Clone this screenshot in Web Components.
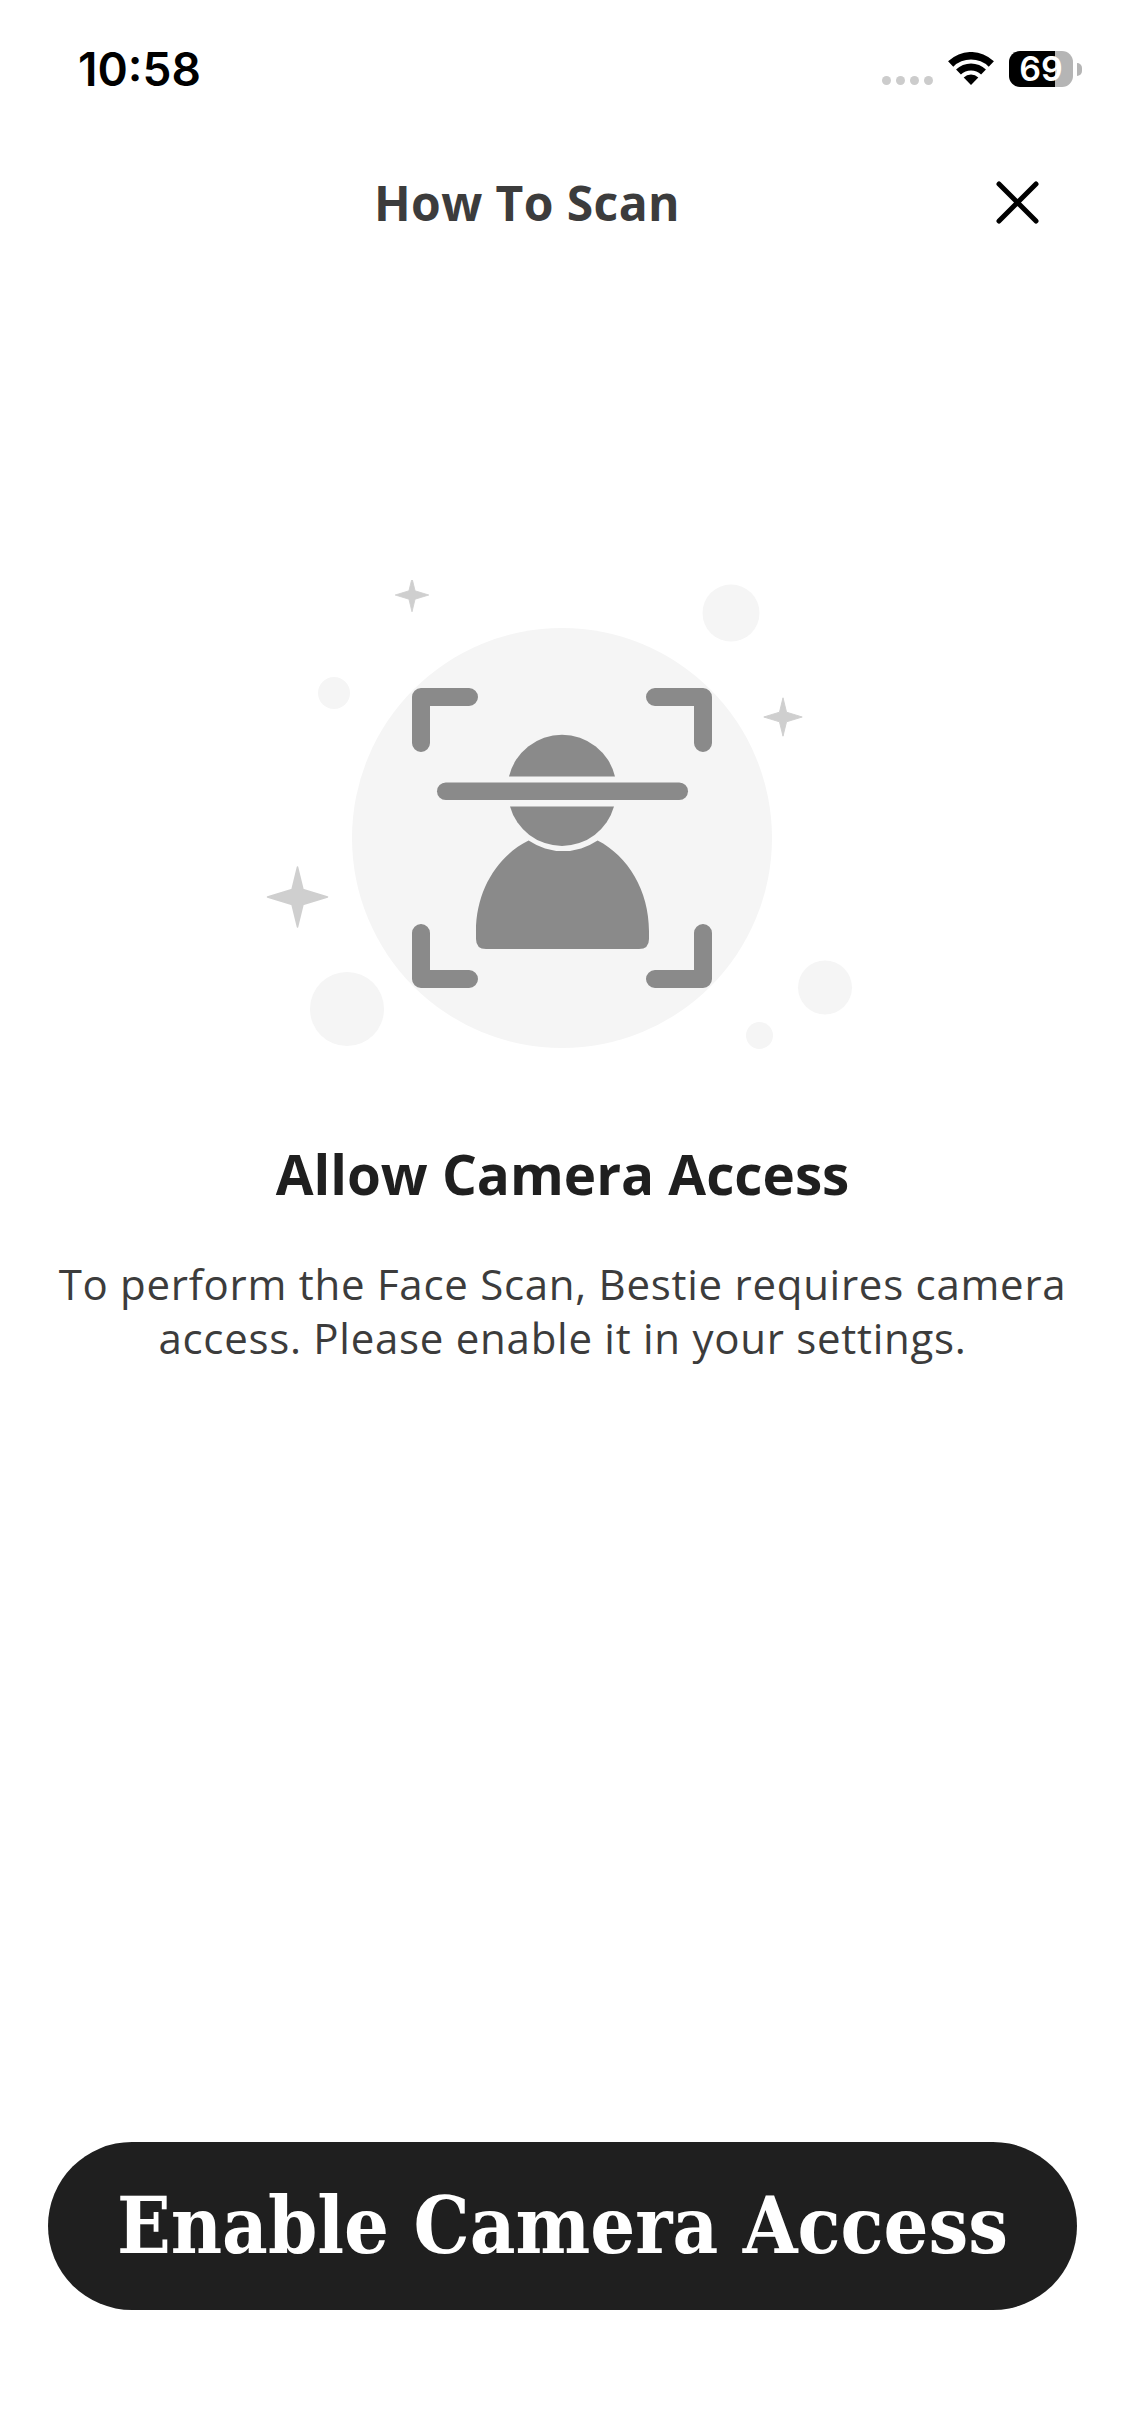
<!DOCTYPE html>
<html lang="en"><head><meta charset="utf-8"><title>How To Scan</title>
<style>
html,body{margin:0;padding:0;background:#fff}
body{font-family:"Open Sans",sans-serif}
</style></head><body>
<app-screen>
  <status-bar time="10:58" level="69"></status-bar>
  <scan-header>How To Scan</scan-header>
  <scan-illustration></scan-illustration>
  <permission-copy heading="Allow Camera Access">To perform the Face Scan, Bestie requires camera<br>access. Please enable it in your settings.</permission-copy>
  <primary-button>Enable Camera Access</primary-button>
</app-screen>
<script>
function def(name, html, init){
  customElements.define(name, class extends HTMLElement{
    constructor(){super();this.attachShadow({mode:'open'}).innerHTML=html;}
    connectedCallback(){if(init)init(this);}
  });
}
def('app-screen',`<style>:host{display:flex;flex-direction:column;width:1125px;height:2436px;background:#fff;overflow:hidden}</style><slot></slot>`);
def('status-bar',`<style>
:host{display:flex;align-items:flex-start;height:161px;box-sizing:border-box;padding:0 43px 0 78px;color:#000}
.time{font:600 46px/54px Inter,sans-serif;margin-top:42px}
.right{margin-left:auto;display:flex;align-items:flex-start;gap:15px;margin-top:51px}
.dots{display:flex;gap:5px;margin-top:25px}
.dots i{width:9px;height:9px;border-radius:50%;background:#ccc}
svg{display:block;margin-top:1px}
.batt{display:flex;align-items:center;gap:4px}
.body{width:64px;height:36px;border-radius:11px;background:linear-gradient(90deg,#000 72%,#b5b5b5 72%);color:#fff;font:600 34px/36px Inter,sans-serif;text-align:center}
.nub{width:5px;height:13px;border-radius:0 5px 5px 0;background:#b5b5b5}
</style>
<div class="time"></div>
<div class="right">
<div class="dots"><i></i><i></i><i></i><i></i></div>
<svg width="46" height="34" viewBox="0 0 46 34" fill="#000"><path d="M.07 9.24A33 33 0 0 1 45.93 9.24L40.72 14.64A25.5 25.5 0 0 0 5.28 14.64Z"/><path d="M8.06 17.52A21.5 21.5 0 0 1 37.94 17.52L33.08 22.56A14.5 14.5 0 0 0 12.92 22.56Z"/><path d="M15.7 25.44A10.5 10.5 0 0 1 30.3 25.44L23 33Z"/></svg>
<div class="batt"><div class="body"></div><div class="nub"></div></div>
</div>`, el=>{
  el.shadowRoot.querySelector('.time').textContent=el.getAttribute('time');
  el.shadowRoot.querySelector('.body').textContent=el.getAttribute('level');
});
def('scan-header',`<style>
:host{display:flex;align-items:center;height:84px;padding:0 86px 0 58px;box-sizing:border-box;width:100%}
.t{flex:1;text-align:center;font:700 48px/84px "Open Sans",sans-serif;color:#3c3c3c;letter-spacing:.4px}
svg{display:block;margin-top:-2px}
</style><div class="t"><slot></slot></div>
<svg width="43" height="43" viewBox="0 0 43 43" fill="none" stroke="#000" stroke-width="5" stroke-linecap="round"><path d="M3 3 40 40M40 3 3 40"/></svg>`);
def('scan-illustration',`<style>
:host{display:flex;justify-content:center;margin-top:335px}
svg{display:block}
</style>
<svg width="640" height="480" viewBox="243 579 640 480">
<defs><path id="s" d="M0-30L5.500-7.500L30 0L5.500 7.500L0 30L-5.500 7.500L-30 0L-5.500-7.500Z" stroke-width="1.500" stroke-linejoin="round" stroke="#cfcfcf"/></defs>
<g fill="#f5f5f5"><circle cx="562" cy="837" r="210"/><circle cx="731" cy="612" r="28.500"/><circle cx="334" cy="692" r="16"/><circle cx="347" cy="1008" r="37"/><circle cx="825" cy="986.500" r="27"/><circle cx="759.500" cy="1034.500" r="13.500"/></g>
<g fill="#cfcfcf"><use href="#s" transform="translate(412 594) scale(.56)"/><use href="#s" transform="translate(783 716) scale(.64)"/><use href="#s" transform="translate(297.500 896)"/></g>
<g fill="none" stroke="#8a8a8a" stroke-width="18" stroke-linecap="round" stroke-linejoin="round">
<path d="M469 696H421V742"/><path d="M655 696H703V742"/><path d="M421 932V978H469"/><path d="M703 932V978H655"/>
</g>
<g fill="#8a8a8a">
<rect x="437" y="781.500" width="251" height="17.500" rx="8.750"/>
<path d="M509 775.500A54.500 54.500 0 0 1 615 775.500Z"/>
<path d="M510 805.500A54 54 0 0 0 614 805.500Z"/>
<path d="M528.600 839.600A62 62 0 0 0 597.600 839.600C628 855 649 890 649 930V938Q649 948 639 948H486Q476 948 476 938V930C476 890 497 855 528.600 839.600Z"/>
</g></svg>`);
def('permission-copy',`<style>
:host{display:block;text-align:center;margin-top:79px}
h1{margin:0;font:700 54.800px/70px "Open Sans",sans-serif;color:#1f1f1f}
p{margin:48px 0 0;font:400 42px/54px "Open Sans",sans-serif;color:#3c3c3c;letter-spacing:.73px}
</style><h1></h1><p><slot></slot></p>`, el=>{el.shadowRoot.querySelector('h1').textContent=el.getAttribute('heading');});
def('primary-button',`<style>
:host{display:block;margin:auto 48px 126px}
button{display:block;width:100%;height:168px;border:0;border-radius:84px;background:#1f1f1f;color:#fff;font:700 78.500px/168px "DejaVu Serif Condensed","DejaVu Serif",serif;font-stretch:condensed;padding:0;white-space:nowrap}
</style><button><slot></slot></button>`);
</script>
</body></html>
